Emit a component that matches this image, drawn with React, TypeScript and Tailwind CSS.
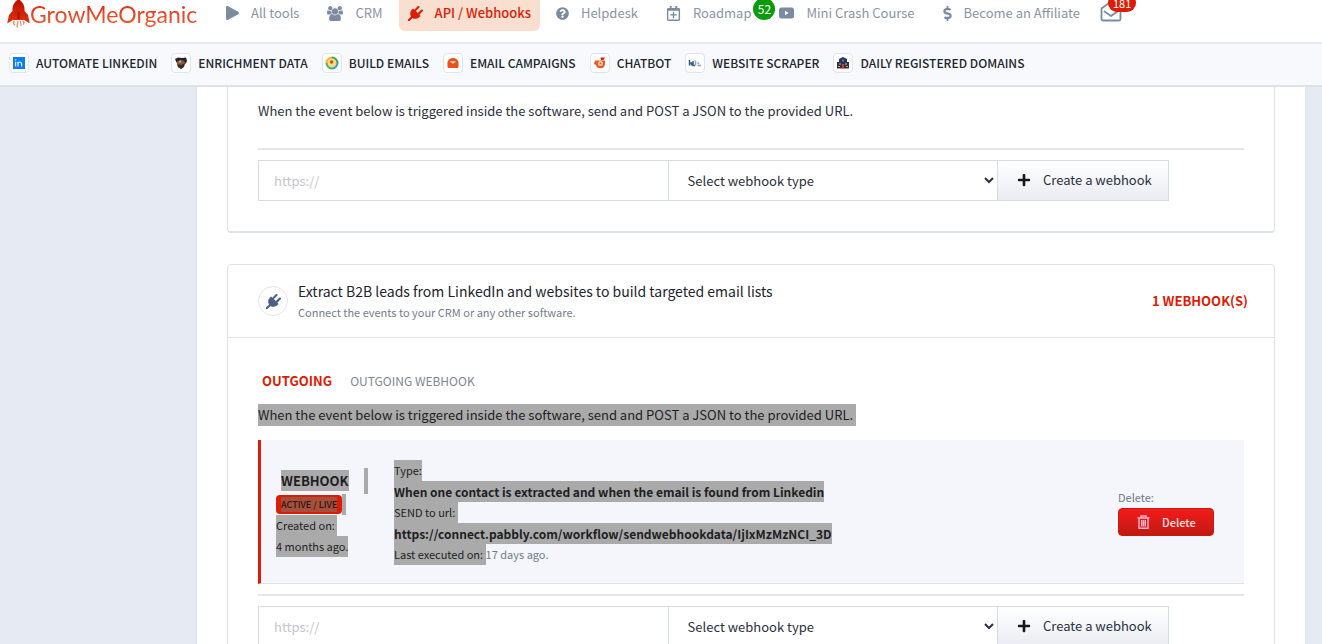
import type { ReactNode } from 'react';
import {
  FaDollarSign,
  FaPlay,
  FaPlus,
  FaQuestionCircle,
  FaRegCalendarPlus,
} from 'react-icons/fa';

type NavItem = {
  label: string;
  icon: ReactNode;
  active?: boolean;
  count?: number;
};

const NAV: NavItem[] = [
  { label: 'All tools', icon: <FaPlay className="h-3.5 w-[13px]" preserveAspectRatio="none" /> },
  { label: 'CRM', icon: <UsersIcon /> },
  { label: 'API / Webhooks', icon: <PlugIcon />, active: true },
  { label: 'Helpdesk', icon: <FaQuestionCircle className="size-[13px]" /> },
  { label: 'Roadmap', icon: <FaRegCalendarPlus className="size-[15px]" />, count: 52 },
  { label: 'Mini Crash Course', icon: <VideoIcon /> },
  { label: 'Become an Affiliate', icon: <FaDollarSign className="h-[15px] w-[9px]" /> },
];

const TOOLS = [
  { label: 'Automate Linkedin', icon: <LinkedinIcon /> },
  { label: 'Enrichment Data', icon: <EnrichIcon /> },
  { label: 'Build Emails', icon: <BuildIcon /> },
  { label: 'Email Campaigns', icon: <CampaignIcon /> },
  { label: 'Chatbot', icon: <ChatbotIcon /> },
  { label: 'Website Scraper', icon: <ScraperIcon /> },
  { label: 'Daily Registered Domains', icon: <DomainsIcon /> },
];

function UsersIcon() {
  return (
    <svg viewBox="0 0 1920 1792" className="h-[15px] w-4" fill="currentColor">
      <path d="M593 896q-162 5-265 128H194q-82 0-138-40.5T0 865q0-353 124-353 6 0 43.5 21t97.5 42.500T384 597q67 0 133-23-5 37-5 66 0 139 81 256zm1071 637q0 120-73 189.500t-194 69.500H523q-121 0-194-69.500T256 1533q0-53 3.500-103.500t14-109T300 1212t43-97.500 62-81 85.500-53.500T602 960q10 0 43 21.500t73 48 107 48T960 1099t135-21.500 107-48 73-48 43-21.500q61 0 111.500 20t85.500 53.500 62 81 43 97.500 26.500 108.500 14 109 3.500 103.500zM640 256q0 106-75 181t-181 75-181-75-75-181 75-181T384 0t181 75 75 181zm704 384q0 159-112.500 271.500T960 1024 688.500 911.500 576 640t112.500-271.500T960 256t271.500 112.500T1344 640zm576 225q0 78-56 118.500t-138 40.500h-134q-103-123-265-128 81-117 81-256 0-29-5-66 66 23 133 23 59 0 119-21.500t97.500-42.500 43.500-21q124 0 124 353zm-128-609q0 106-75 181t-181 75-181-75-75-181 75-181 181-75 181 75 75 181z" />
    </svg>
  );
}

function PlugIcon() {
  return (
    <svg viewBox="0 0 1792 1792" className="size-[15px]" fill="currentColor">
      <path d="M1755 453q37 38 37 90.500t-37 90.500l-401 400 150 150-160 160q-163 163-389.500 186.500T543 1430l-362 362H0v-181l362-362q-124-185-100.500-411.500T448 448l160-160 150 150 400-401q38-37 91-37t90 37 37 90.500-37 90.500L939 608l234 234 401-400q38-37 91-37t90 48z" />
    </svg>
  );
}

function VideoIcon() {
  return (
    <svg viewBox="0 0 15 12" className="h-3 w-[15px]">
      <rect x="0" y="0.5" width="15" height="11" rx="2.5" fill="currentColor" />
      <path d="M6 3.8v4.400L9.600 6z" fill="#fff" />
    </svg>
  );
}

function LinkedinIcon() {
  return (
    <svg viewBox="0 0 14 14" className="size-3.5">
      <rect x="1" y="1" width="12" height="12" fill="#0a7cf0" />
      <g stroke="#d9ecff" strokeWidth="1.3" fill="none">
        <path d="M3.6 5.8v4.7M3.6 3.2v1.2M6 10.5V5.8M6 7.6c.4-1.8 3.6-2.2 3.6.4v2.5" />
      </g>
    </svg>
  );
}

function EnrichIcon() {
  return (
    <svg viewBox="0 0 14 14" className="size-3.5">
      <path d="M1 3l3-1.5 4 .5 4-.5 1 3-1 3H3z" fill="#23242c" />
      <path d="M3 5.5l5-1.5 3 2-1 4-3 3-3-2z" fill="#8a5a3c" />
      <path d="M3 8l4 1 4-2-1 4-3 2-3-2z" fill="#3c2a22" />
      <circle cx="6" cy="5.6" r="1.2" fill="#d9a577" />
    </svg>
  );
}

function BuildIcon() {
  return (
    <svg viewBox="0 0 14 14" className="size-3.5">
      <circle cx="7" cy="7" r="5.5" fill="#f6dc86" />
      <path d="M7 1.5A5.5 5.5 0 0112.5 7" fill="none" stroke="#35a853" strokeWidth="2" />
      <path d="M12.5 7A5.5 5.5 0 017 12.5" fill="none" stroke="#2aa1c4" strokeWidth="2" />
      <path d="M7 12.5A5.5 5.5 0 011.5 7" fill="none" stroke="#3fb56b" strokeWidth="2" />
      <path d="M1.5 7A5.5 5.5 0 017 1.5" fill="none" stroke="#f0b429" strokeWidth="2" />
      <circle cx="6.6" cy="6" r="1.7" fill="#e0442c" />
    </svg>
  );
}

function CampaignIcon() {
  return (
    <svg viewBox="0 0 14 14" className="size-3.5">
      <path d="M1.500 6Q3 2 7 2t5.500 4v4.500a1.500 1.500 0 01-1.500 1.500H3a1.500 1.500 0 01-1.500-1.500z" fill="#e8501c" />
      <path d="M3.500 5.200h7L7 7.700z" fill="#ffd9c7" />
    </svg>
  );
}

function ChatbotIcon() {
  return (
    <svg viewBox="0 0 14 14" className="size-3.5">
      <path d="M2 4.500h10v3a4.600 4.600 0 01-9 1.500L1 8z" fill="#ea5a1e" />
      <circle cx="7.500" cy="7.600" r="2.500" fill="#ffd4bd" />
      <path d="M6 8.200l1.500-2 1.500 2z" fill="#ea5a1e" />
      <path d="M7.500 1.500h4.500l-1.500 2.500H8z" fill="#d9200f" />
    </svg>
  );
}

function ScraperIcon() {
  return (
    <svg viewBox="0 0 14 14" className="size-3.5" fill="none" strokeWidth="1.5">
      <path d="M1.500 4v5.500M1.500 7h2v2.500M5 5v4.500h2" stroke="#34607f" />
      <path d="M7.500 4.500v5M9.500 9.500H13M9.500 6.500l1.500 1.500" stroke="#8ea5b5" />
    </svg>
  );
}

function DomainsIcon() {
  return (
    <svg viewBox="0 0 14 14" className="size-3.5">
      <path d="M3 3l4-2 4 2v3H3z" fill="#2c3350" />
      <path d="M1 6h12v6.500H1z" fill="#3a3138" />
      <path d="M3 7h2v2H3zM9 7h2v2H9zM6 3.500h2v2H6z" fill="#4c7bd0" />
      <path d="M6 8h2v4.500H6z" fill="#c8452c" />
      <path d="M2 10h2v1H2zM10 10h2v1h-2z" fill="#d99c55" />
    </svg>
  );
}

function Rocket() {
  return (
    <svg viewBox="0 0 23 28" className="h-7 w-[23px] shrink-0">
      <defs>
        <linearGradient id="rocket" x1="0" y1="0" x2="0" y2="1">
          <stop offset="0" stopColor="#b81200" />
          <stop offset="1" stopColor="#e5300e" />
        </linearGradient>
      </defs>
      <path d="M11.500 -1c4.500 3 6.500 7 6 12l3.500 4 1.800 8.500-5.500-3.500H5.700L.2 23.500 2 15l3.500-4c-.5-5 1.500-9 6-12z" fill="url(#rocket)" />
      <path d="M10.500 12h2v7h-2z" fill="#a80f00" />
      <path d="M7.500 21c-1.500 1.800-1 3 .4 4.300M10.500 21c1.500 2-1.500 3.500 0 6.500M13.500 21c-1 2 1.500 2.500.4 4.800M16 21c1.500 1.500.8 3 .2 3.600" fill="none" stroke="#f0895e" strokeWidth="1.300" />
    </svg>
  );
}

function Inbox() {
  return (
    <a href="#inbox" aria-label="Inbox" className="relative ml-5 text-[#7b8ba0]">
      <svg viewBox="0 0 22 22" className="size-[22px]" fill="none" stroke="currentColor" strokeWidth="1.800" strokeLinejoin="round">
        <path d="M1.500 8.500L11 1.500l9.500 7V19a1.500 1.500 0 01-1.500 1.500H3A1.500 1.500 0 011.500 19z" />
        <path d="M4.500 11.500L11 16l6.500-4.500" strokeLinecap="round" />
      </svg>
      <span className="absolute -top-1.5 left-2 h-[18px] rounded-full bg-[#dd1c05] px-[5px] text-[11px] leading-[18px] text-white">
        181
      </span>
    </a>
  );
}

function TrashIcon() {
  return (
    <svg viewBox="0 0 13 14" className="h-3.5 w-[13px]" fill="none" stroke="#ffb3cc" strokeWidth="1.400">
      <path d="M.5 3h12M4 3V1h5v2M2 3v10.300h9V3M4.700 5v6.500M6.500 5v6.500M8.300 5v6.500" />
    </svg>
  );
}

function WebhookForm() {
  return (
    <form className="grid h-[41px] grid-cols-[5fr_4fr_172px] pr-[75px]">
      <input
        type="url"
        aria-label="Webhook URL"
        placeholder="https://"
        className="min-w-0 border border-[#d5dde6] px-[15px] text-[13px] outline-none placeholder:text-[#c3c6cb]"
      />
      <select
        aria-label="Webhook type"
        className="min-w-0 border-y border-[#d5dde6] bg-white px-[15px] text-[13px] text-[#2b3040]"
      >
        <option>Select webhook type</option>
      </select>
      <button
        type="button"
        className="flex items-center gap-3 border border-[#d5dde6] bg-linear-to-b from-white to-[#e9ecf2] pb-0.5 pl-[19px] text-[13px] text-[#2b3040]"
      >
        <FaPlus className="size-3.5 text-[#14161c]" />
        Create a webhook
      </button>
    </form>
  );
}

/* Text inside the current selection */
function Marked({ children, className = '' }: { children?: ReactNode; className?: string }) {
  return <span className={`inline-block bg-[#aaaaaa] text-[#1d1f24] ${className}`}>{children}</span>;
}

const DESCRIPTION =
  'When the event below is triggered inside the software, send and POST a JSON to the provided URL.';

export default function App() {
  return (
    <div className="flex h-screen flex-col overflow-hidden bg-[#e5eaf3] font-['Noto_Sans_CJK_SC','Source_Sans_Pro',sans-serif] text-[13px] text-[#2b3040]">
      <header className="flex h-11 shrink-0 items-start border-b-2 border-[#e6eaf0] bg-white">
        <a href="#home" className="flex h-[27px] w-[226px] shrink-0 items-center pl-[7px]">
          <Rocket />
          <span className="bg-linear-to-b from-[#d81d06] to-[#f0603a] bg-clip-text font-[Lato] text-[23px] leading-7 text-transparent">
            GrowMeOrganic
          </span>
        </a>
        <nav className="flex gap-7">
          {NAV.map((item) => (
            <a
              key={item.label}
              href="#nav"
              className={
                item.active
                  ? 'relative -mx-3 flex h-[31px] items-center gap-3 rounded-b-md bg-[#f8dfd0] px-[9px] pb-[5px] font-medium whitespace-nowrap text-[#dd1c05]'
                  : 'relative flex h-[31px] items-center gap-3 pb-[5px] whitespace-nowrap text-[#8a94a4]'
              }
            >
              <span className={item.active ? '' : 'text-[#7b8ba0]'}>{item.icon}</span>
              {item.label}
              {item.count && (
                <span className="absolute -top-0.5 left-full ml-0.5 size-[22px] rounded-full bg-[#0a9b0a] text-center text-[12px] leading-[22px] font-normal text-white">
                  {item.count}
                </span>
              )}
            </a>
          ))}
        </nav>
        <Inbox />
      </header>

      <nav className="flex h-[43px] shrink-0 items-center gap-3.5 border-b-2 border-[#dce2ea] bg-[#f7f9fc] pb-[3px] pl-[9px]">
        {TOOLS.map((tool) => (
          <a key={tool.label} href="#tool" className="flex items-center gap-[7px] text-[12px] font-medium whitespace-nowrap text-[#20262f] uppercase">
            <span className="flex size-5 items-center justify-center rounded border border-[#dfe5ee] bg-white">
              {tool.icon}
            </span>
            {tool.label}
          </a>
        ))}
      </nav>

      <main className="mr-4 ml-[196px] min-h-0 flex-1 overflow-hidden border-x border-[#dce2ea] bg-white px-[30px]">
        <section className="rounded-b border border-t-0 border-b-2 border-[#dde3eb] px-[30px] pt-[13px] pb-[30px]">
          <p className="leading-[21px]">{DESCRIPTION}</p>
          <hr className="mt-[27px] mb-2.5 border-t-2 border-[#e5e6e8]" />
          <WebhookForm />
        </section>

        <section className="mt-[31px] rounded border border-[#dde3eb]">
          <div className="flex h-[73px] items-center border-b border-[#dde3eb] pr-[26px] pl-[30px]">
            <span className="flex size-[30px] items-center justify-center rounded-full border border-[#e1e6ee] text-[#4a5f82]">
              <PlugIcon />
            </span>
            <div className="ml-2.5 flex-1">
              <h2 className="text-[14px] leading-[22px] text-[#20242e]">
                Extract B2B leads from LinkedIn and websites to build targeted email lists
              </h2>
              <p className="text-[11px] leading-5 text-[#737d8d]">
                Connect the events to your CRM or any other software.
              </p>
            </div>
            <span className="font-bold text-[#dd1c05]">1 WEBHOOK(S)</span>
          </div>

          <div className="px-[30px] pt-8 pb-[30px]">
            <div className="flex h-6 gap-[18px] pl-1 leading-[22px]">
              <a href="#outgoing" className="font-bold text-[#dd1c05]">OUTGOING</a>
              <a href="#outgoing-webhook" className="text-[12px] text-[#7d8795]">OUTGOING WEBHOOK</a>
            </div>
            <p className="mt-2.5 leading-[22px]">
              <Marked>{DESCRIPTION}&nbsp;</Marked>
            </p>

            <div className="mt-3.5 flex h-36 border-b border-l-3 border-b-[#dfe1e6] border-l-[#dd1c05] bg-[#f4f6fb] pt-5 pl-[15px] text-[11px] leading-[21px]">
              <div className="w-[118px] shrink-0 pt-[7px]">
                <div className="flex h-[27px] items-center justify-between pr-[26px] pl-[5px]">
                  <Marked className="text-[13px] font-bold">WEBHOOK</Marked>
                  <Marked className="h-[26px] w-1" />
                </div>
                <div className="flex h-[21px] items-center">
                  <span className="flex h-[19px] items-center rounded bg-[#dd1c05] px-[5px]">
                    <span className="bg-[#a4503c] text-[9px] leading-[15px] font-medium text-[#33120c]">ACTIVE / LIVE</span>
                  </span>
                  <Marked className="h-[21px] w-1" />
                </div>
                <Marked>Created on:&nbsp;</Marked>
                <br />
                <Marked>4 months ago.</Marked>
              </div>
              <div className="min-w-0 flex-1">
                <div className="h-[21px]"><Marked>Type:</Marked></div>
                <div className="h-[21px]">
                  <Marked className="text-[12px] font-bold">
                    When one contact is extracted and when the email is found from Linkedin
                  </Marked>
                </div>
                <div className="h-[21px]"><Marked>SEND to url:&nbsp;</Marked></div>
                <div className="h-[21px]">
                  <Marked className="text-[12px] font-bold">
                    https://connect.pabbly.com/workflow/sendwebhookdata/IjIxMzMzNCI_3D
                  </Marked>
                </div>
                <div className="h-[21px] text-[#717b8b]">
                  <Marked>Last executed on:&nbsp;</Marked>17 days ago.
                </div>
              </div>
              <div className="w-[126px] shrink-0 pt-[27px] text-[#6f7888]">
                Delete:
                <button
                  type="button"
                  className="flex h-7 w-24 items-center gap-3 rounded border border-[#c91a12] bg-linear-to-b from-[#f31b1b] to-[#c01a12] pl-[18px] font-medium text-[#ffe3e0]"
                >
                  <TrashIcon />
                  Delete
                </button>
              </div>
            </div>

            <hr className="my-2.5 border-t-2 border-[#e5e6e8]" />
            <WebhookForm />
          </div>
        </section>
      </main>
    </div>
  );
}
